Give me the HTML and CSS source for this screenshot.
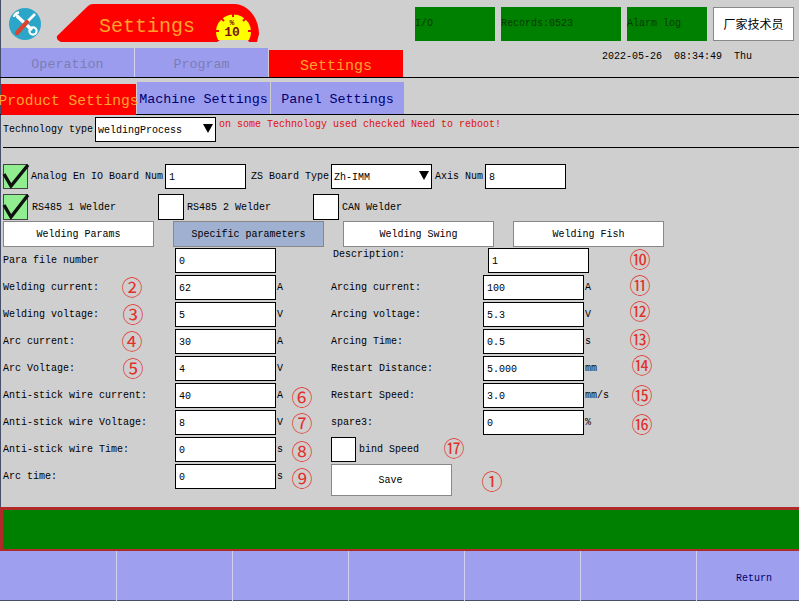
FILE: index.html
```html
<!DOCTYPE html>
<html lang="en">
<head>
    <meta charset="UTF-8">
    <meta name="viewport" content="width=device-width, initial-scale=1.0">
    <title>Settings</title>
    <link rel="stylesheet" href="styles.css">
</head>
<body>
<div class="page">
    <div class="top">
        <svg class="tool-icon" width="32" height="32" viewBox="0 0 32 32">
            <circle cx="16" cy="16" r="16" fill="#2ba6c9"/>
            <path d="M8 8 L23 22" stroke="#fff" stroke-width="3.4"/>
            <path d="M6 5.5 L9 8.5 M10 4.5 A5 5 0 0 0 5 9" stroke="#fff" stroke-width="2.4" fill="none"/>
            <circle cx="24" cy="23" r="3.6" fill="none" stroke="#fff" stroke-width="2.2"/>
            <path d="M26 6 L18 14" stroke="#fff" stroke-width="2.6"/>
            <path d="M18 14 L8 25" stroke="#d9432f" stroke-width="4.2" stroke-linecap="round"/>
        </svg>
        <svg class="banner" width="204" height="40" viewBox="0 0 204 40">
            <path d="M1 32 L32 2 Q34 0 37 0 L178 0 C192 0 203 14 203 30 L201 38 L193 38 L192 36 L164 36 L161 38 L5 38 Q0 36 1 32 Z" fill="#f00"/>
            <path d="M162 36 A17.5 17.5 0 1 1 193 36 Z" fill="#ff0"/>
            <path d="M177 9 V13 M165 14 L168 17 M190 14 L187 17 M160 27 H163 M195 27 H192" stroke="#f00" stroke-width="2"/>
            <text class="banner-title" x="43" y="28">Settings</text>
            <text class="banner-unit" x="176" y="21">%</text>
            <text class="banner-num" x="176" y="32">10</text>
        </svg>
        <div class="status-boxes">
            <div class="status-box w80">I/O</div>
            <div class="status-box w120">Records:0523</div>
            <div class="status-box w80">Alarm log</div>
            <div class="user-box">厂家技术员</div>
        </div>
    </div>

    <div class="tabs">
        <div class="tab off">Operation</div>
        <div class="tab off">Program</div>
        <div class="tab current">Settings</div>
        <div class="clock">2022-05-26&nbsp;&nbsp;08:34:49&nbsp;&nbsp;Thu</div>
    </div>

    <div class="subtabs">
        <div class="subtab current">Product Settings</div>
        <div class="subtab">Machine Settings</div>
        <div class="subtab">Panel Settings</div>
    </div>

    <div class="tech-row">
        <span class="tech-label">Technology type</span>
        <div class="select-box tech-select">
            <select><option>weldingProcess</option></select>
        </div>
        <span class="warn">on some Technology used checked Need to reboot!</span>
    </div>

    <div class="board-row">
        <span class="check on">
            <svg width="25" height="25" viewBox="0 0 25 25"><path d="M1 10 L8 22 L25 1" fill="none" stroke="#111" stroke-width="3.4"/></svg>
        </span>
        <span class="board-label first">Analog En IO Board Num</span>
        <input class="field board-input" type="text" value="1">
        <span class="board-label zs">ZS Board Type</span>
        <div class="select-box zs-select">
            <select><option>Zh-IMM</option></select>
        </div>
        <span class="board-label axis">Axis Num</span>
        <input class="field board-input" type="text" value="8">
    </div>

    <div class="weld-row">
        <span class="check on tall">
            <svg width="25" height="26" viewBox="0 0 25 26"><path d="M1 11 L8 23 L25 1" fill="none" stroke="#111" stroke-width="3.4"/></svg>
        </span>
        <span class="weld-label w1">RS485 1 Welder</span>
        <span class="check tall"></span>
        <span class="weld-label w2">RS485 2 Welder</span>
        <span class="check tall"></span>
        <span class="weld-label">CAN Welder</span>
    </div>

    <div class="btn-row">
        <div class="btn">Welding Params</div>
        <div class="btn selected">Specific parameters</div>
        <div class="btn">Welding Swing</div>
        <div class="btn">Welding Fish</div>
    </div>

    <div class="form">
        <div class="col left-col">
            <div class="row"><span class="lbl">Para file number</span><input class="field" type="text" value="0"></div>
            <div class="row"><span class="lbl">Welding current:</span><input class="field" type="text" value="62"><span class="unit">A</span></div>
            <div class="row"><span class="lbl">Welding voltage:</span><input class="field" type="text" value="5"><span class="unit">V</span></div>
            <div class="row"><span class="lbl">Arc current:</span><input class="field" type="text" value="30"><span class="unit">A</span></div>
            <div class="row"><span class="lbl">Arc Voltage:</span><input class="field" type="text" value="4"><span class="unit">V</span></div>
            <div class="row"><span class="lbl">Anti-stick wire current:</span><input class="field" type="text" value="40"><span class="unit">A</span></div>
            <div class="row"><span class="lbl">Anti-stick wire Voltage:</span><input class="field" type="text" value="8"><span class="unit">V</span></div>
            <div class="row"><span class="lbl">Anti-stick wire Time:</span><input class="field" type="text" value="0"><span class="unit">s</span></div>
            <div class="row"><span class="lbl">Arc time:</span><input class="field" type="text" value="0"><span class="unit">s</span></div>
        </div>
        <div class="col right-col">
            <div class="row"><span class="lbl desc">Description:</span><input class="field" type="text" value="1"></div>
            <div class="row"><span class="lbl">Arcing current:</span><input class="field" type="text" value="100"><span class="unit">A</span></div>
            <div class="row"><span class="lbl">Arcing voltage:</span><input class="field" type="text" value="5.3"><span class="unit">V</span></div>
            <div class="row"><span class="lbl">Arcing Time:</span><input class="field" type="text" value="0.5"><span class="unit">s</span></div>
            <div class="row"><span class="lbl">Restart Distance:</span><input class="field" type="text" value="5.000"><span class="unit">mm</span></div>
            <div class="row"><span class="lbl">Restart Speed:</span><input class="field" type="text" value="3.0"><span class="unit">mm/s</span></div>
            <div class="row"><span class="lbl">spare3:</span><input class="field" type="text" value="0"><span class="unit">%</span></div>
            <div class="row"><span class="check square"></span><span class="bind">bind Speed</span></div>
            <div class="btn save">Save</div>
        </div>

        <!-- red notes drawn over the form -->
        <span class="mark m2">②</span>
        <span class="mark m3">③</span>
        <span class="mark m4">④</span>
        <span class="mark m5">⑤</span>
        <span class="mark m6">⑥</span>
        <span class="mark m7">⑦</span>
        <span class="mark m8">⑧</span>
        <span class="mark m9">⑨</span>
        <span class="mark m10">⑩</span>
        <span class="mark m11">⑪</span>
        <span class="mark m12">⑫</span>
        <span class="mark m13">⑬</span>
        <span class="mark m14">⑭</span>
        <span class="mark m15">⑮</span>
        <span class="mark m16">⑯</span>
        <span class="mark m17">⑰</span>
        <span class="mark m1">①</span>
    </div>

    <div class="message-bar"></div>

    <div class="footer">
        <div class="foot-cell"></div>
        <div class="foot-cell"></div>
        <div class="foot-cell"></div>
        <div class="foot-cell"></div>
        <div class="foot-cell"></div>
        <div class="foot-cell"></div>
        <div class="foot-cell">Return</div>
    </div>
</div>
</body>
</html>
```

FILE: styles.css
```css
* {
    box-sizing: border-box;
}
body {
    margin: 0;
    background: #cfcfcf;
    font-family: "Liberation Mono", "Noto Sans CJK SC", monospace;
    font-size: 10px;
    color: #000;
}
.page {
    width: 799px;
    height: 601px;
    overflow: hidden;
    display: flex;
    flex-direction: column;
    background: #cfcfcf;
    box-shadow: inset 1px 0 0 #46506a, inset 0 -1px 0 #46506a;
}

/* header */
.top {
    height: 48px;
    display: flex;
    padding-left: 9px;
}
.tool-icon {
    margin-top: 8px;
}
.banner {
    margin: 4px 0 0 15px;
}
.banner-title {
    font-size: 20px;
    fill: #ffa42a;
}
.banner-unit {
    font-size: 8px;
    font-weight: bold;
    text-anchor: middle;
    fill: #7a1010;
}
.banner-num {
    font-size: 13px;
    font-weight: bold;
    text-anchor: middle;
    fill: #7a1010;
}
.status-boxes {
    display: flex;
    gap: 6px;
    margin: 7px 0 0 155px;
    height: 34px;
}
.status-box {
    background: #008000;
    color: #063a06;
    line-height: 34px;
}
.w80 {
    width: 80px;
}
.w120 {
    width: 120px;
}
.user-box {
    width: 81px;
    background: #fff;
    border: 1px solid #888;
    font-family: "Noto Sans CJK SC", sans-serif;
    font-size: 12px;
    line-height: 32px;
    text-align: center;
}

/* tabs */
.tabs {
    height: 30px;
    display: flex;
    align-items: flex-end;
    border-bottom: 1px solid #000;
    padding-left: 1px;
}
.tab {
    width: 134px;
    height: 29px;
    background: #9b9cee;
    font-size: 13.4px;
    line-height: 33px;
    text-align: center;
}
.tab.off {
    color: #7b7cb4;
    border-right: 1px solid #d4d4f0;
}
.tab.off + .tab.off {
    width: 133px;
    border-right: 0;
}
.tab.current {
    height: 27px;
    background: #f00;
    color: #ffa42a;
    font-size: 15px;
    line-height: 33px;
    margin-left: 1px;
}
.clock {
    align-self: flex-start;
    margin: 3px 0 0 199px;
}
.subtabs {
    height: 37px;
    display: flex;
    align-items: flex-end;
    border-bottom: 1px solid #000;
    padding-left: 1px;
}
.subtab {
    width: 133px;
    height: 32px;
    margin-right: 1px;
    background: #9b9cee;
    color: #00006e;
    font-size: 13.4px;
    line-height: 35px;
    text-align: center;
    white-space: nowrap;
}
.subtab:last-child {
    margin-right: 0;
}
.subtab.current {
    width: 135px;
    height: 31px;
    margin-bottom: -1px;
    background: #f00;
    color: #ffa42a;
    font-size: 14.6px;
    position: relative;
    display: flex;
    justify-content: center;
}

/* technology type */
.tech-row {
    height: 33px;
    margin-left: 3px;
    padding-top: 2px;
    display: flex;
    border-bottom: 1px solid #000;
}
.tech-label {
    width: 92px;
    line-height: 26px;
}
.select-box {
    position: relative;
    height: 25px;
    border: 1px solid #000;
    background: #fff;
    flex: none;
}
.select-box select {
    width: 100%;
    height: 23px;
    padding: 1px 0 0 2px;
    border: 0;
    outline: 0;
    appearance: none;
    background: transparent;
    font: inherit;
    color: #000;
}
.select-box::after {
    content: "";
    position: absolute;
    top: 6px;
    right: 2px;
    border-left: 5px solid transparent;
    border-right: 5px solid transparent;
    border-top: 9px solid #000;
}
.tech-select {
    width: 121px;
}
.warn {
    margin: 2px 0 0 3px;
    line-height: 12px;
    color: #e01010;
}

/* board rows */
.board-row {
    display: flex;
    height: 24px;
    margin: 16px 0 0 3px;
}
.check {
    display: block;
    width: 26px;
    height: 25px;
    border: 1px solid #000;
    background: #fff;
    flex: none;
}
.check.on {
    width: 25px;
    background: #90ee90;
    border-color: #444;
}
.check svg {
    display: block;
    margin: -1px;
    overflow: visible;
}
.check.tall {
    height: 26px;
}
.check.square {
    width: 25px;
}
.board-label {
    line-height: 26px;
}
.board-label.first {
    width: 137px;
    padding-left: 3px;
}
.board-label.zs {
    width: 85px;
    padding-left: 5px;
}
.board-label.axis {
    width: 53px;
    padding-left: 3px;
}
.field {
    width: 101px;
    height: 25px;
    border: 1px solid #000;
    border-radius: 0;
    padding: 1px 3px 0;
    outline: 0;
    background: #fff;
    font: inherit;
    color: #000;
    flex: none;
}
.board-input {
    width: 81px;
}
.zs-select {
    width: 101px;
}
.weld-row {
    display: flex;
    height: 25px;
    margin: 6px 0 0 3px;
}
.weld-label {
    padding-left: 3px;
    line-height: 27px;
}
.weld-label.w1 {
    width: 130px;
    padding-left: 4px;
}
.weld-label.w2 {
    width: 129px;
}
.btn-row {
    display: flex;
    gap: 19px;
    height: 25px;
    margin: 2px 0 0 3px;
}
.btn {
    width: 151px;
    height: 26px;
    border: 1px solid #888;
    background: #fff;
    line-height: 25px;
    text-align: center;
}
.btn.selected {
    background: #9fb0d0;
}

/* parameter form */
.form {
    position: relative;
    height: 259px;
    margin-top: 2px;
    display: flex;
    padding-left: 3px;
}
.left-col {
    width: 328px;
}
.row {
    display: flex;
    height: 27px;
}
.lbl {
    width: 172px;
    line-height: 26px;
    white-space: nowrap;
}
.right-col .lbl {
    width: 152px;
}
.right-col .lbl.desc {
    width: 157px;
    padding-left: 2px;
    line-height: 14px;
}
.unit {
    padding-left: 1px;
    line-height: 26px;
}
.bind {
    padding-left: 3px;
    line-height: 26px;
}
.btn.save {
    width: 121px;
    height: 32px;
    line-height: 31px;
    padding-right: 2px;
}
.mark {
    position: absolute;
    width: 24px;
    margin-top: -1px;
    font-family: "Noto Sans CJK SC", sans-serif;
    font-size: 21px;
    line-height: 24px;
    text-align: center;
    color: #e2302c;
}
.m2 { left: 120px; top: 27px; }
.m3 { left: 121px; top: 54px; }
.m4 { left: 120px; top: 81px; }
.m5 { left: 121px; top: 108px; }
.m6 { left: 290px; top: 137px; }
.m7 { left: 290px; top: 163px; }
.m8 { left: 290px; top: 191px; }
.m9 { left: 290px; top: 218px; }
.m10 { left: 628px; top: -1px; }
.m11 { left: 628px; top: 25px; }
.m12 { left: 628px; top: 51px; }
.m13 { left: 628px; top: 79px; }
.m14 { left: 630px; top: 105px; }
.m15 { left: 630px; top: 135px; }
.m16 { left: 630px; top: 164px; }
.m17 { left: 442px; top: 188px; }
.m1 { left: 480px; top: 221px; }

/* bottom */
.message-bar {
    height: 44px;
    background: #008000;
    border: 3px solid #b12a2a;
    border-bottom-width: 2px;
    border-right: 0;
}
.footer {
    height: 49px;
    display: grid;
    grid-template-columns: 117px repeat(5, 116px) 102px;
    background: #9e9fef;
}
.foot-cell {
    border-right: 1px solid #cfd0f2;
    color: #00006e;
    line-height: 55px;
    text-align: center;
}
.foot-cell:last-child {
    border-right: 0;
    padding-left: 12px;
}
```
